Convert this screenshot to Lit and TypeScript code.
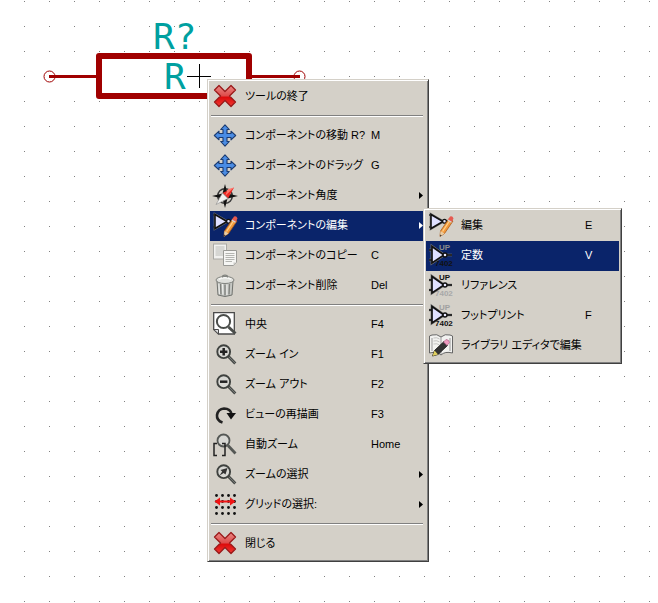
import { LitElement, html, svg, css, nothing, type TemplateResult } from "lit";
import { customElement, property } from "lit/decorators.js";
import { classMap } from "lit/directives/class-map.js";

interface MenuEntry {
  label: string;
  icon: string;
  key?: string;
  active?: boolean;
  arrow?: boolean;
  children?: MenuEntry[];
}

type Group = MenuEntry[];

const magnifier = svg`
  <path d="M15.500 14.500L22.300 21.500" stroke="#484b48" stroke-width="3" />
  <path d="M16 15L22 21" stroke="#777a77" stroke-width="1" />
  <circle cx="10.700" cy="9.700" r="6.400" fill="#d8d8d4" stroke="#3f423f" stroke-width="1.900" />`;

const gate = svg`
  <path d="M0 2H3M0 14H3M15 8H23" stroke="#111" stroke-width="1.500" />
  <path d="M2 1.500V15.500L14 8.500Z" fill="#dfe0ff" stroke="#777" stroke-width="2.600" />
  <path d="M2 1.500V15.500L14 8.500Z" fill="#dfe0ff" stroke="#111" stroke-width="1.600" />
  <circle cx="15.500" cy="8.300" r="1.900" fill="#e8e8ff" stroke="#111" stroke-width="1.300" />`;

const namedGate = (top: string, bottom: string) => svg`
  <text x="10" y="7" font-family="Liberation Sans" font-size="8" font-weight="700" fill="${top}">UP</text>
  <text x="6" y="23" font-family="Liberation Sans" font-size="8" font-weight="700" fill="${bottom}">7402</text>
  <path d="M0 7H4M0 17H4M16 12H23" stroke="#777" stroke-width="2.400" />
  <path d="M3 3.500V20L15 12Z" fill="#dfe0ff" stroke="#777" stroke-width="2.800" />
  <path d="M0 7H4M0 17H4M16 12H23" stroke="#111" stroke-width="1.500" />
  <path d="M3 3.500V20L15 12Z" fill="#dfe0ff" stroke="#111" stroke-width="1.700" />
  <circle cx="16" cy="12" r="2" fill="#e8e8ff" stroke="#111" stroke-width="1.400" />`;

const icons: Record<string, TemplateResult> = {
  close: svg`
    <defs><linearGradient id="red" x1="0" y1="0" x2="0" y2="1">
      <stop offset="0" stop-color="#ea8a86" /><stop offset=".5" stop-color="#de4a48" />
      <stop offset=".55" stop-color="#dc0a0a" /><stop offset="1" stop-color="#f03a34" />
    </linearGradient></defs>
    <path d="M6 1.500L12 7.500L18 1.500L22.500 6L16.500 12L22.500 18L18 22.500L12 16.500L6 22.500L1.500 18L7.500 12L1.500 6Z"
      fill="url(#red)" stroke="#9a1a1a" stroke-width="1.300" stroke-linejoin="round" />`,
  move: svg`
    <path d="M12 1.800L16.300 6.500H14V10.500H18V8.200L22.700 12.500L18 16.800V14.500H14V18.500H16.300L12 23.200L7.700 18.500H10V14.500H6V16.800L1.300 12.500L6 8.200V10.500H10V6.500H7.700Z"
      fill="#4a8ce4" stroke="#1c3b70" stroke-width="1.100" stroke-linejoin="round" />`,
  compass: svg`
    <circle cx="12" cy="13" r="7.300" fill="#d4d0c8" stroke="#3a3a3a" stroke-width="1.500" />
    <path d="M12 1L14.500 10.500L25 13L14.500 15.500L12 25L9.500 15.500L-1 13L9.500 10.500Z" fill="#111" />
    <path d="M21 4.500L15 15.500L9.500 10Z" fill="#ee2a24" />
    <path d="M15 6L21 4.500L12.200 12.700Z" fill="#ff7a70" />
    <path d="M3 21.500L9.500 10L15 15.500Z" fill="#f2f2f0" stroke="#8a8a8a" stroke-width=".6" />`,
  edit: svg`
    ${gate}
    <path d="M20 5.500L11.500 18L11 23.500L15.500 20.500L24 8Z" fill="#f39a3c" stroke="#a85a1c" stroke-width=".8" />
    <path d="M20.500 8L13.500 18.500" stroke="#ffd08a" stroke-width="1.300" />
    <path d="M11.500 18L11 23.500L15.500 20.500Z" fill="#e8cda6" />
    <path d="M11.200 21.500L11 23.500L12.700 22.500Z" fill="#333" />
    <path d="M18.800 7L21 3.500Q23.500 2.500 24.500 5.500L22.500 9.300Z" fill="#e65a50" />
    <path d="M18.800 7L22.500 9.300" stroke="#cfd4dc" stroke-width="1.300" />`,
  copy: svg`
    <rect x=".5" y="1" width="13" height="15" fill="#f1f1ef" stroke="#aaaaa6" />
    <path d="M2.500 4H11.500M2.500 6H11.500M2.500 8H11.500M2.500 10H11.500M2.500 12H11.500" stroke="#bbbcb8" />
    <path d="M10.500 7.500H23.500V19.500L20.500 22.500H10.500Z" fill="#f6f6f4" stroke="#9a9a96" />
    <path d="M12.500 10.500H21.500M12.500 12.500H21.500M12.500 14.500H21.500M12.500 16.500H21.500M12.500 18.500H19" stroke="#b4b5b1" />
    <path d="M20.500 22.500V19.500H23.500Z" fill="#c8c8c4" />`,
  trash: svg`
    <path d="M4 8H20L19 22Q12 25 5 22Z" fill="#c6c8c4" stroke="#70726e" />
    <path d="M7.500 11L8 21.500M12 11.500V22.500M16.500 11L16 21.500" stroke="#80827e" stroke-width="1.400" />
    <path d="M9.500 11L9.900 21.500M13.900 11.500V22M5.900 11L6.400 21" stroke="#f0f1ee" />
    <ellipse cx="12" cy="7" rx="9" ry="3.500" fill="#dfe0dc" stroke="#80827e" />
    <path d="M6 6.200Q12 3.500 18 6.200" fill="none" stroke="#f8f8f6" stroke-width="1.500" />
    <path d="M9.500 4.500V3Q12 1.300 14.500 3V4.500" fill="none" stroke="#80827e" stroke-width="1.300" />`,
  center: svg`
    <path d="M.7 .7H21.300V22H5.500L.7 17.500Z" fill="#fff" stroke="#4a4a4a" stroke-width="1.300" />
    <path d="M.7 17.500H5.500V22Z" fill="#ddd" stroke="#4a4a4a" />
    <path d="M15.500 15L22.500 21.500" stroke="#4a4d4a" stroke-width="3" />
    <circle cx="10.500" cy="9.500" r="6.600" fill="#fff" stroke="#4a4d4a" stroke-width="2" />`,
  zoomIn: svg`${magnifier}<path d="M7 9.700H14.400M10.700 6V13.400" stroke="#222" stroke-width="2.500" />`,
  zoomOut: svg`${magnifier}<path d="M7 9.700H14.400" stroke="#222" stroke-width="2.500" />`,
  redraw: svg`
    <path d="M9.500 20.500Q3.500 18.500 4 13Q5 7 11 6.500Q17.500 6.800 18.500 12" fill="none" stroke="#222" stroke-width="2.600" />
    <path d="M13.500 11H23L18 17.500Z" fill="#111" />`,
  autoZoom: svg`
    <path d="M15 13.500L22.500 21.500" stroke="#555855" stroke-width="2.800" />
    <circle cx="10.500" cy="8.500" r="6" fill="#d8d8d4" stroke="#555855" stroke-width="1.800" />
    <path d="M4 11.500H1V23.500H4M9 23.500H12V11.500H9" fill="none" stroke="#222" stroke-width="1.500" />`,
  zoomSelect: svg`${magnifier}<path d="M14.500 6L12.500 12.500L10.700 11L6.500 13.500L9.200 9.500L7.500 8Z" fill="#333" />`,
  grid: svg`
    ${[3, 9, 15, 21].map((y) => [3, 9, 15, 21].map((x) => svg`<circle cx="${x + 0.5}" cy="${y + 0.5}" r="1.400" fill="#111" />`))}
    <path d="M1.500 9.500L7 5.500V8.500H17V5.500L22.500 9.500L17 13.500V10.500H7V13.500Z" fill="#f01414" />`,
  value: namedGate("#8c8c8c", "#111"),
  reference: namedGate("#111", "#a8a8a8"),
  footprint: namedGate("#a0a0a0", "#111"),
  library: svg`
    <path d="M.5 3L3 2Q8 .500 12 4Q16 .500 21 2L23.500 3V20Q16 18 12 22Q8 18 .5 20Z" fill="#f2f2f0" stroke="#666" />
    <path d="M12 4V21M3 5V18M21 5V18" stroke="#999" />
    <path d="M4.500 5Q8 4 10.500 6M4.500 8Q8 7 10.500 9M4.500 11Q8 10 10.500 12" fill="none" stroke="#c4c4c2" />
    <path d="M15 8.500L5.500 17.500L3.500 23L9 21.500L18.500 12.500Z" fill="#333" stroke="#111" stroke-width=".8" />
    <path d="M5.500 17.500L3.500 23L9 21.500Z" fill="#e0d060" />
    <path d="M14.500 9L17 6.500Q20 6.500 20.500 9.500L18 12.500Z" fill="#ee9ac0" stroke="#a45a80" stroke-width=".6" />`,
};

const editGroup: Group = [
  { label: "編集", icon: "edit", key: "E" },
  { label: "定数", icon: "value", key: "V", active: true },
  { label: "リファレンス", icon: "reference" },
  { label: "フットプリント", icon: "footprint", key: "F" },
  { label: "ライブラリ エディタで編集", icon: "library" },
];

const mainGroups: Group[] = [
  [{ label: "ツールの終了", icon: "close" }],
  [
    { label: "コンポーネントの移動 R?", icon: "move", key: "M" },
    { label: "コンポーネントのドラッグ", icon: "move", key: "G" },
    { label: "コンポーネント角度", icon: "compass", arrow: true },
    { label: "コンポーネントの編集", icon: "edit", arrow: true, active: true, children: editGroup },
    { label: "コンポーネントのコピー", icon: "copy", key: "C" },
    { label: "コンポーネント削除", icon: "trash", key: "Del" },
  ],
  [
    { label: "中央", icon: "center", key: "F4" },
    { label: "ズーム イン", icon: "zoomIn", key: "F1" },
    { label: "ズーム アウト", icon: "zoomOut", key: "F2" },
    { label: "ビューの再描画", icon: "redraw", key: "F3" },
    { label: "自動ズーム", icon: "autoZoom", key: "Home" },
    { label: "ズームの選択", icon: "zoomSelect", arrow: true },
    { label: "グリッドの選択:", icon: "grid", arrow: true },
  ],
  [{ label: "閉じる", icon: "close" }],
];

@customElement("popup-menu")
export class PopupMenu extends LitElement {
  @property({ attribute: false }) groups: Group[] = [];

  static styles = css`
    :host {
      display: block;
      box-sizing: border-box;
      padding: 1px;
      border: 1px solid;
      border-color: #d4d0c8 #404040 #404040 #d4d0c8;
      box-shadow: inset 1px 1px #fff, inset -1px -1px #808080;
      background: #d4d0c8;
      font: 11px/16px "Liberation Sans", "Noto Sans CJK JP", sans-serif;
      font-feature-settings: "palt";
      color: #000;
    }
    .list {
      padding: 1px;
    }
    .item {
      position: relative;
    }
    .row {
      display: grid;
      grid-template-columns: 24px var(--label-width, 118px) 1fr auto;
      column-gap: 8px;
      align-items: center;
      width: 100%;
      height: 30px;
      padding: 0 3px 2px;
      border: 0;
      background: none;
      color: inherit;
      font: inherit;
      font-feature-settings: inherit;
      text-align: left;
      white-space: nowrap;
    }
    .row.active {
      background: #0a246a;
      color: #fff;
    }
    .icon {
      display: block;
      width: 24px;
      height: 24px;
      overflow: visible;
    }
    .arrow {
      display: block;
      width: 4px;
      height: 7px;
      fill: currentColor;
    }
    .line {
      height: 1px;
      margin: 3px 3px 4px 1px;
      border: 0;
      border-top: 1px solid #808080;
      background: #fff;
    }
    .submenu {
      position: absolute;
      z-index: 1;
      top: -3px;
      left: calc(100% - 3px);
      width: 199px;
      --label-width: 116px;
    }
  `;

  private renderEntry(entry: MenuEntry): TemplateResult {
    return html`
      <div class="item">
        <button
          type="button"
          role="menuitem"
          class=${classMap({ row: true, active: !!entry.active })}
          aria-haspopup=${entry.arrow ? "menu" : nothing}
        >
          <svg class="icon" viewBox="0 0 24 24" fill="none" aria-hidden="true">${icons[entry.icon]}</svg>
          <span>${entry.label}</span>
          <span>${entry.key ?? nothing}</span>
          ${entry.arrow
            ? html`<svg class="arrow" viewBox="0 0 4 7" aria-hidden="true"><path d="M0 0L4 3.500L0 7Z" /></svg>`
            : nothing}
        </button>
        ${entry.children ? html`<popup-menu class="submenu" .groups=${[entry.children]}></popup-menu>` : nothing}
      </div>
    `;
  }

  render() {
    return html`
      <div class="list" role="menu">
        ${this.groups.map(
          (group, i) => html`${i ? html`<hr class="line" />` : nothing}${group.map((entry) => this.renderEntry(entry))}`
        )}
      </div>
    `;
  }
}

@customElement("app-root")
export class AppRoot extends LitElement {
  static styles = css`
    :host {
      display: block;
      position: relative;
      min-height: 100vh;
      overflow: hidden;
      background: #fff;
    }
    .sheet {
      position: absolute;
      inset: 0;
      width: 100%;
      height: 100%;
    }
    .field {
      font: 36px "DejaVu Sans Mono", monospace;
      fill: #00a0a0;
    }
    .context {
      position: absolute;
      top: 79px;
      left: 207px;
      width: 222px;
    }
  `;

  render() {
    return html`
      <svg class="sheet" role="img" aria-label="R?">
        <defs>
          <pattern id="dots" x="24" y="1" width="25" height="25" patternUnits="userSpaceOnUse">
            <rect width="1" height="1" fill="#808080" />
          </pattern>
        </defs>
        <rect width="100%" height="100%" fill="url(#dots)" />
        <g fill="none" stroke="#a00000">
          <rect x="99" y="56" width="150" height="40" stroke-width="6" stroke-linejoin="round" />
          <path d="M49 76.500H99M249 76.500H300" stroke-width="3" />
          <circle cx="49.500" cy="76.500" r="5.500" />
          <circle cx="299.500" cy="76.500" r="5.500" />
        </g>
        <text class="field" x="153" y="49">R?</text>
        <text class="field" x="164" y="89">R</text>
        <path d="M187 76.500H211M199.500 64V88" stroke="#000" />
      </svg>
      <popup-menu class="context" .groups=${mainGroups}></popup-menu>
    `;
  }
}
